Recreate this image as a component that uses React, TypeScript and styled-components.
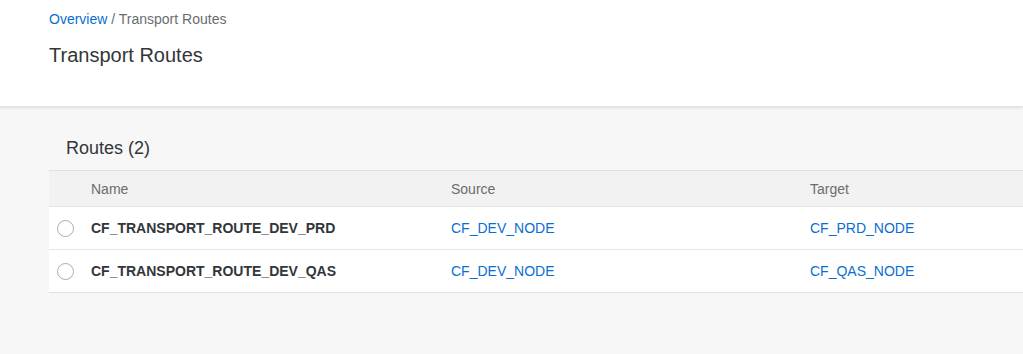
import styled, { createGlobalStyle } from "styled-components";

type Route = { name: string; source: string; target: string };

const routes: Route[] = [
  { name: "CF_TRANSPORT_ROUTE_DEV_PRD", source: "CF_DEV_NODE", target: "CF_PRD_NODE" },
  { name: "CF_TRANSPORT_ROUTE_DEV_QAS", source: "CF_DEV_NODE", target: "CF_QAS_NODE" },
];

const Global = createGlobalStyle`
  html, body { margin:0; padding:0; }
  body {
    background:#f7f7f7;
    font-family:"Liberation Sans", Arial, sans-serif;
    color:#32363a;
  }
`;

export default function App() {
  return (
    <>
      <Global />
      <Header>
        <Breadcrumbs>
          <Crumb href="#">Overview</Crumb>
          <Sep> / </Sep>
          <Current>Transport Routes</Current>
        </Breadcrumbs>
        <Title>Transport Routes</Title>
      </Header>

      <Content>
        <TableTitle>Routes ({routes.length})</TableTitle>
        <Table>
          <HeadRow>
            <SelCell />
            <HeadCell>Name</HeadCell>
            <HeadCell>Source</HeadCell>
            <HeadCell>Target</HeadCell>
          </HeadRow>
          {routes.map((r) => (
            <Row key={r.name}>
              <SelCell>
                <Radio />
              </SelCell>
              <NameCell>{r.name}</NameCell>
              <LinkCell>{r.source}</LinkCell>
              <LinkCell>{r.target}</LinkCell>
            </Row>
          ))}
        </Table>
      </Content>
    </>
  );
}

const Header = styled.header`
  background:#fff;
  height:107px;
  box-sizing:border-box;
  padding:11px 49px 0;
  box-shadow:0 1px 3px rgba(0,0,0,.1);
  border-bottom:1px solid #e0e0e0;
  position:relative;
`;

const Breadcrumbs = styled.div`
  font-size:14px; line-height:17px; color:#6a6d70;
`;

const Crumb = styled.a`
  color:#0a6ed1; text-decoration:none;
`;

const Sep = styled.span`
  white-space:pre;
`;

const Current = styled.span``;

const Title = styled.h1`
  margin:15px 0 0; font-size:20px; font-weight:400; line-height:24px; color:#32363a;
`;

const Content = styled.main`
  padding:28px 0 0 49px;
`;

const TableTitle = styled.div`
  padding-left:17px; font-size:18px; line-height:26px; color:#32363a; height:35px;
`;

const Table = styled.div`
  border-top:1px solid #e0e0e0;
  border-bottom:1px solid #e0e0e0;
`;

const grid = `
  display:grid;
  grid-template-columns:42px 360px 359px 1fr;
  align-items:center;
`;

const HeadRow = styled.div`
  ${grid}
  height:35px;
  background:#f2f2f2;
  border-bottom:1px solid #e5e5e5;
`;

const Row = styled.div`
  ${grid}
  height:42px;
  background:#fff;
  & + & { border-top:1px solid #e5e5e5; }
`;

const SelCell = styled.div`
  display:flex; align-items:center; padding-left:8px;
`;

const Radio = styled.span`
  box-sizing:border-box;
  width:17px; height:17px; border-radius:50%;
  border:1px solid #a9acae; background:#fff;
`;

const HeadCell = styled.div`
  font-size:14px; color:#6a6d70;
`;

const NameCell = styled.div`
  font-size:14px; font-weight:700; color:#32363a;
`;

const LinkCell = styled.div`
  font-size:14px; color:#0a6ed1;
`;
